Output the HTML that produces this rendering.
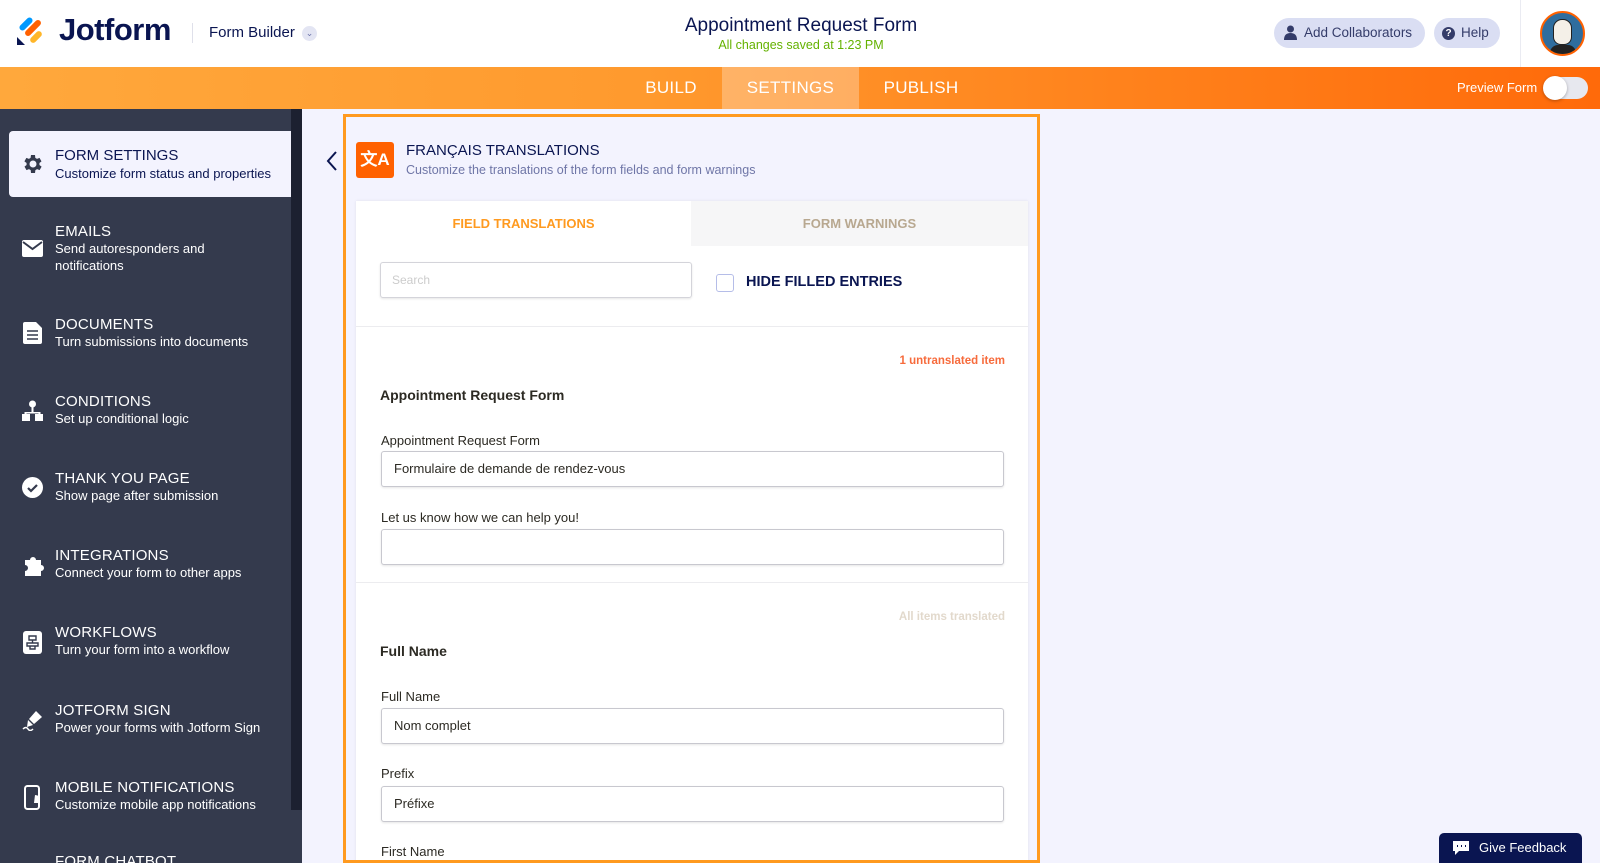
<!DOCTYPE html>
<html style="width:1600px;height:863px;overflow:hidden"><head><meta charset="utf-8"><style>
*{box-sizing:border-box;margin:0;padding:0}
body{width:1600px;height:863px;overflow:hidden;position:relative;background:#f3f3fe;font-family:"Liberation Sans",sans-serif;color:#0a1551}
.a{position:absolute;white-space:nowrap}
.hdr{left:0;top:0;width:1600px;height:67px;background:#fff}
.bar{left:0;top:67px;width:1600px;height:42px;background:linear-gradient(90deg,#ffa83c 0%,#ff9a2e 40%,#ff6a0a 100%)}
.tab{top:67px;height:42px;line-height:42px;color:#fff;font-size:17px;letter-spacing:.3px}
.side{left:0;top:109px;width:291px;height:754px;background:#343a4d}
.scroll{left:291px;top:109px;width:11px;height:754px;background:#1c2030}
.it .t{font-size:15px;color:#fff;letter-spacing:.2px}
.it .s{font-size:13px;color:#fff;line-height:17px}
.lbl{font-size:13px;color:#2c2a23;left:381px}
.inp{left:381px;width:623px;height:36px;border:1px solid #c8c8cf;border-radius:3px;background:#fff;box-shadow:0 1px 2px rgba(0,0,0,.1);font-size:13px;padding-left:12px;line-height:34px;color:#2c2a23}
.bold{font-size:14px;font-weight:bold;color:#2c2a23;left:380px}
</style></head><body>
<div class="a hdr"></div>
<svg class="a" style="left:16px;top:15px" width="30" height="32" viewBox="0 0 30 32">
<rect x="2" y="6" width="16" height="6" rx="3" transform="rotate(-45 10 9)" fill="#0099ff"/>
<rect x="7" y="10" width="20" height="6" rx="3" transform="rotate(-45 17 13)" fill="#ff6100"/>
<rect x="13" y="19" width="14" height="6" rx="3" transform="rotate(-45 20 22)" fill="#ffb629"/>
<path d="M1 22 L1 30 L9 30 Z" fill="#0a1551"/>
</svg>
<div class="a" style="left:59px;top:12px;font-size:31px;font-weight:bold;color:#0a1551;letter-spacing:-.5px">Jotform</div>
<div class="a" style="left:192px;top:23px;width:1px;height:20px;background:#dfe0ea"></div>
<div class="a" style="left:209px;top:24px;font-size:15px;color:#0a1551">Form Builder</div>
<div class="a" style="left:302px;top:26px;width:15px;height:15px;border-radius:50%;background:#e3e5f3;font-size:9px;line-height:15px;text-align:center;color:#6c73a8">&#8964;</div>
<div class="a" style="left:601px;top:15px;width:400px;text-align:center;font-size:19px;color:#0a1551">Appointment Request Form</div>
<div class="a" style="left:601px;top:38px;width:400px;text-align:center;font-size:12.5px;color:#64b200">All changes saved at 1:23 PM</div>
<div class="a" style="left:1274px;top:18px;width:151px;height:30px;border-radius:15px;background:#dadef3;font-size:13.5px;line-height:30px;padding-left:30px;color:#343c6a">Add Collaborators</div>
<svg class="a" style="left:1284px;top:25px" width="13" height="15" viewBox="0 0 13 15"><circle cx="6.5" cy="4" r="3.5" fill="#343c6a"/><path d="M0 15 Q0 8 6.5 8 Q13 8 13 15Z" fill="#343c6a"/></svg>
<div class="a" style="left:1434px;top:18px;width:66px;height:30px;border-radius:15px;background:#dadef3;font-size:13.5px;line-height:30px;padding-left:27px;color:#343c6a">Help</div>
<div class="a" style="left:1442px;top:27px;width:13px;height:13px;border-radius:50%;background:#343c6a;color:#fff;font-size:10px;line-height:13px;text-align:center;font-weight:bold">?</div>
<div class="a" style="left:1520px;top:0;width:1px;height:67px;background:#eaebf2"></div>
<div class="a" style="left:1540px;top:11px;width:45px;height:45px;border-radius:50%;background:#2f6d9e;border:2px solid #ff6100;overflow:hidden">
<div style="position:absolute;left:11px;top:6px;width:19px;height:26px;border-radius:9px 9px 8px 8px;background:#f4f0e8;border:1.5px solid #222"></div>
<div style="position:absolute;left:8px;top:32px;width:26px;height:14px;border-radius:8px 8px 0 0;background:#222"></div></div>
<div class="a bar"></div>
<div class="a" style="left:722px;top:67px;width:137px;height:42px;background:rgba(255,255,255,.28)"></div>
<div class="a tab" style="left:610px;width:122px;text-align:center">BUILD</div>
<div class="a tab" style="left:722px;width:137px;text-align:center">SETTINGS</div>
<div class="a tab" style="left:860px;width:122px;text-align:center">PUBLISH</div>
<div class="a" style="left:1457px;top:80px;font-size:13px;color:#fff">Preview Form</div>
<div class="a" style="left:1544px;top:77px;width:44px;height:22px;border-radius:11px;background:#e7e8ef"></div>
<div class="a" style="left:1543px;top:76px;width:24px;height:24px;border-radius:50%;background:#fff;box-shadow:0 1px 3px rgba(0,0,0,.3)"></div>

<div class="a side"></div><div class="a scroll"></div>
<div class="a" style="left:291px;top:810px;width:11px;height:53px;background:#343a4d"></div>
<div class="a" style="left:9px;top:131px;width:282px;height:66px;background:#f3f3fe;border-radius:4px 0 0 4px"></div>
<svg class="a" style="left:21px;top:152px" width="24" height="24" viewBox="0 0 24 24"><path fill="#343a4d" d="M19.4 13a7.5 7.5 0 000-2l2.1-1.6-2-3.5-2.5 1a7.6 7.6 0 00-1.7-1L15 3h-4l-.4 2.9a7.6 7.6 0 00-1.7 1l-2.5-1-2 3.5L6.6 11a7.5 7.5 0 000 2l-2.1 1.6 2 3.5 2.5-1a7.6 7.6 0 001.7 1L11 21h4l.4-2.9a7.6 7.6 0 001.7-1l2.5 1 2-3.5zM13 15.5A3.5 3.5 0 1113 8.5a3.5 3.5 0 010 7z" transform="translate(-1 0)"/></svg>
<div class="a" style="left:55px;top:147px;font-size:15px;color:#0a1551">FORM SETTINGS</div>
<div class="a" style="left:55px;top:166px;font-size:13px;color:#0a1551">Customize form status and properties</div>

<div class="a it" style="left:55px;top:223px"><div class="t">EMAILS</div><div class="s">Send autoresponders and<br>notifications</div></div>
<svg class="a" style="left:22px;top:240px" width="21" height="17" viewBox="0 0 21 17"><rect width="21" height="17" rx="2" fill="#fff"/><path d="M1 2l9.5 7L20 2" stroke="#343a4d" stroke-width="2" fill="none"/></svg>
<div class="a it" style="left:55px;top:316px"><div class="t">DOCUMENTS</div><div class="s">Turn submissions into documents</div></div>
<svg class="a" style="left:23px;top:322px" width="19" height="22" viewBox="0 0 19 22"><path d="M2 0h11l6 6v14a2 2 0 01-2 2H2a2 2 0 01-2-2V2a2 2 0 012-2z" fill="#fff"/><path d="M4 9h11M4 13h11M4 17h11" stroke="#343a4d" stroke-width="1.6"/></svg>
<div class="a it" style="left:55px;top:393px"><div class="t">CONDITIONS</div><div class="s">Set up conditional logic</div></div>
<svg class="a" style="left:22px;top:400px" width="21" height="22" viewBox="0 0 21 22"><circle cx="10.5" cy="4" r="3.5" fill="#fff"/><path d="M9.5 7h2v5h7v3h-2v-1.5h-12V15h-2v-3h7z" fill="#fff"/><rect x="0" y="14" width="8" height="7" fill="#fff"/><rect x="13" y="14" width="8" height="7" fill="#fff"/></svg>
<div class="a it" style="left:55px;top:470px"><div class="t">THANK YOU PAGE</div><div class="s">Show page after submission</div></div>
<svg class="a" style="left:22px;top:477px" width="21" height="21" viewBox="0 0 21 21"><circle cx="10.5" cy="10.5" r="10.5" fill="#fff"/><path d="M6 11l3 3 6-6" stroke="#343a4d" stroke-width="2.2" fill="none"/></svg>
<div class="a it" style="left:55px;top:547px"><div class="t">INTEGRATIONS</div><div class="s">Connect your form to other apps</div></div>
<svg class="a" style="left:22px;top:555px" width="22" height="21" viewBox="0 0 22 21"><path d="M3 5h5a3 3 0 116 0h5v5a3 3 0 110 6v5H3v-5a3 3 0 100-6z" fill="#fff"/></svg>
<div class="a it" style="left:55px;top:624px"><div class="t">WORKFLOWS</div><div class="s">Turn your form into a workflow</div></div>
<svg class="a" style="left:23px;top:631px" width="19" height="23" viewBox="0 0 19 23"><rect width="19" height="23" rx="3" fill="#fff"/><path d="M6 5h7v4H6zM9.5 9v3M4 12h11v3H4zM7 15v3h5v-3" stroke="#343a4d" stroke-width="1.4" fill="none"/></svg>
<div class="a it" style="left:55px;top:702px"><div class="t">JOTFORM SIGN</div><div class="s">Power your forms with Jotform Sign</div></div>
<svg class="a" style="left:22px;top:709px" width="22" height="22" viewBox="0 0 22 22"><path d="M14 2l6 6-8 7-5-5z" fill="#fff"/><path d="M6 11l5 5-6 2z" fill="#fff"/><path d="M1 20q3-3 5 0t5 0" stroke="#fff" stroke-width="1.5" fill="none"/></svg>
<div class="a it" style="left:55px;top:779px"><div class="t">MOBILE NOTIFICATIONS</div><div class="s">Customize mobile app notifications</div></div>
<svg class="a" style="left:24px;top:785px" width="20" height="25" viewBox="0 0 20 25"><rect x="1" y="1" width="14" height="23" rx="2.5" stroke="#fff" stroke-width="2" fill="none"/><path d="M11 10q5 0 5 5v3h3l-9 0h0z" fill="#fff"/></svg>
<div class="a it" style="left:55px;top:853px"><div class="t">FORM CHATBOT</div></div>

<svg class="a" style="left:325px;top:150px" width="14" height="22" viewBox="0 0 14 22"><path d="M11 2L3 11l8 9" stroke="#0a1551" stroke-width="2" fill="none"/></svg>

<div class="a" style="left:356px;top:201px;width:672px;height:662px;background:#fff;box-shadow:0 0 3px rgba(0,0,0,.08)"></div>
<div class="a" style="left:343px;top:114px;width:697px;height:749px;border:3px solid #ff9a1f"></div>
<div class="a" style="left:356px;top:142px;width:38px;height:36px;border-radius:3px;background:#ff6100;color:#fff;font-size:17px;line-height:36px;text-align:center;font-weight:bold">文A</div>
<div class="a" style="left:406px;top:142px;font-size:15px;color:#0a1551">FRANÇAIS TRANSLATIONS</div>
<div class="a" style="left:406px;top:163px;font-size:12.5px;color:#6f76a7">Customize the translations of the form fields and form warnings</div>

<div class="a" style="left:691px;top:201px;width:337px;height:45px;background:#f6f6f7"></div>
<div class="a" style="left:356px;top:216px;width:335px;text-align:center;font-size:13px;font-weight:bold;color:#ff9a1f">FIELD TRANSLATIONS</div>
<div class="a" style="left:691px;top:216px;width:337px;text-align:center;font-size:13px;font-weight:bold;color:#b8a890">FORM WARNINGS</div>
<div class="a" style="left:380px;top:262px;width:312px;height:36px;border:1px solid #d4d4da;border-radius:3px;box-shadow:0 1px 2px rgba(0,0,0,.1);font-size:12px;color:#ccc;padding-left:11px;line-height:34px">Search</div>
<div class="a" style="left:716px;top:274px;width:18px;height:18px;border:1.5px solid #b5bde8;border-radius:3px"></div>
<div class="a" style="left:746px;top:274px;font-size:14.5px;font-weight:bold;color:#0a1551">HIDE FILLED ENTRIES</div>
<div class="a" style="left:356px;top:326px;width:672px;height:1px;background:#ececef"></div>
<div class="a" style="left:805px;top:355px;width:200px;text-align:right;font-size:11.5px;font-weight:bold;color:#f76b3c">1 untranslated item</div>
<div class="a bold" style="top:387px">Appointment Request Form</div>
<div class="a lbl" style="top:433px">Appointment Request Form</div>
<div class="a inp" style="top:451px">Formulaire de demande de rendez-vous</div>
<div class="a lbl" style="top:510px">Let us know how we can help you!</div>
<div class="a inp" style="top:529px"></div>
<div class="a" style="left:356px;top:582px;width:672px;height:1px;background:#ececef"></div>
<div class="a" style="left:805px;top:611px;width:200px;text-align:right;font-size:11.5px;font-weight:bold;color:#e2d9cc">All items translated</div>
<div class="a bold" style="top:643px">Full Name</div>
<div class="a lbl" style="top:689px">Full Name</div>
<div class="a inp" style="top:708px">Nom complet</div>
<div class="a lbl" style="top:766px">Prefix</div>
<div class="a inp" style="top:786px">Préfixe</div>
<div class="a lbl" style="top:844px">First Name</div>

<div class="a" style="left:1439px;top:833px;width:143px;height:30px;border-radius:5px 5px 0 0;background:#0a1551;color:#fff;font-size:13px;line-height:30px;padding-left:40px">Give Feedback</div>
<svg class="a" style="left:1452px;top:840px" width="18" height="16" viewBox="0 0 18 16"><path d="M1 1h16v10H7l-4 4v-4H1z" fill="#fff"/><path d="M5 6h1M9 6h1M13 6h1" stroke="#0a1551" stroke-width="2"/></svg>
</body></html>
